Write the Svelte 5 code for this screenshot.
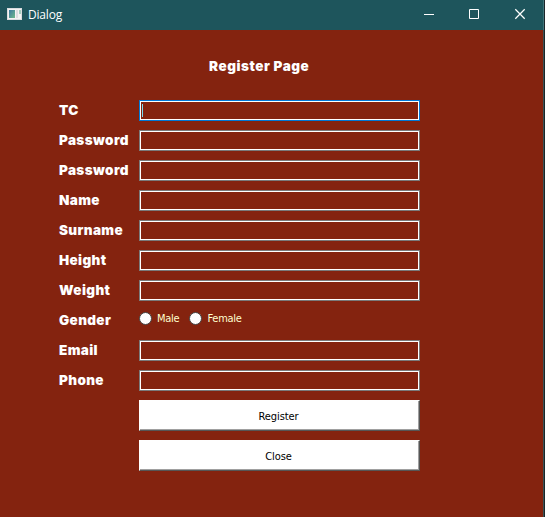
<script>
  const before = ['TC', 'Password', 'Password', 'Name', 'Surname', 'Height', 'Weight'];
  const after = ['Email', 'Phone'];
</script>

{#snippet field(label, focused)}
  <div class="row">
    <span class="label">{label}</span>
    <div class="input" class:focused>
      {#if focused}<span class="caret"></span>{/if}
    </div>
  </div>
{/snippet}

<div class="window">
  <header>
    <svg class="app-icon" width="15" height="12" viewBox="0 0 15 12">
      <defs>
        <linearGradient id="pane" x1="0" y1="0" x2="1" y2="1">
          <stop offset="0" stop-color="#3c78a0" />
          <stop offset="1" stop-color="#6fba8b" />
        </linearGradient>
      </defs>
      <rect width="15" height="12" fill="#d9dcdf" />
      <rect x="1" y="1" width="13" height="10" fill="#f3f3f3" />
      <rect x="2" y="2" width="6" height="8" fill="url(#pane)" />
      <rect x="9" y="2" width="2" height="8" fill="#dedee2" />
      <rect x="12" y="2" width="2" height="4" fill="#a3cdbf" />
    </svg>
    <span class="title">Dialog</span>
    <svg class="controls" width="104" height="12" viewBox="0 0 104 12">
      <path d="M0 6.5H10M45.5 1.5h9v9h-9z" fill="none" stroke="#fff" />
      <path d="M91.3 1.3l9.4 9.4M100.7 1.3l-9.4 9.4" fill="none" stroke="#fff" stroke-width="1.25" />
    </svg>
  </header>
  <main>
    <h1>Register Page</h1>
    {#each before as label, i}
      {@render field(label, i === 0)}
    {/each}
    <div class="row">
      <span class="label">Gender</span>
      <div class="radios">
        <span class="radio"><i></i>Male</span>
        <span class="radio"><i></i>Female</span>
      </div>
    </div>
    {#each after as label}
      {@render field(label, false)}
    {/each}
    <button>Register</button>
    <button>Close</button>
  </main>
</div>

<style>
  .window {
    box-sizing: border-box;
    width: 545px;
    height: 517px;
    overflow: hidden;
    background: #84230f;
    border-right: 1px solid #1c2629;
    box-shadow: inset -1px 0 #3c5153;
    color: #fff;
  }
  header {
    box-sizing: border-box;
    display: flex;
    align-items: center;
    height: 30px;
    padding: 0 15px 2px 7px;
    background: #1e555c;
    border-right: 1px solid #3f7379;
  }
  .title {
    margin-left: 6px;
    flex: 1;
    font: 12px/16px "Open Sans", sans-serif;
    letter-spacing: -0.2px;
    padding-top: 2px;
  }
  .controls {
    flex: none;
  }
  main {
    padding: 26px 0 0 59px;
  }
  h1 {
    margin: 0 0 24px;
    padding-left: 150px;
    font: 900 13.5px/20px Inter, sans-serif;
    letter-spacing: 0.54px;
  }
  .row {
    display: flex;
    height: 21px;
    margin-bottom: 9px;
  }
  .label {
    width: 80px;
    flex: none;
    font: 900 13.5px/20px Inter, sans-serif;
    letter-spacing: 0.38px;
    white-space: nowrap;
  }
  .input {
    box-sizing: border-box;
    width: 281px;
    height: 21px;
    border: 1px solid #7a7a7a;
    box-shadow: inset 0 0 0 1px #fff;
    padding: 3px 2px;
  }
  .focused {
    border-color: #0078d7;
  }
  .caret {
    display: block;
    width: 1px;
    height: 13px;
    background: #7bdcf0;
  }
  .radios {
    display: flex;
    gap: 10px;
    height: 17px;
    align-items: center;
  }
  .radio {
    display: flex;
    align-items: center;
    gap: 5px;
    color: #ffffd0;
    font: 11px/14px "DejaVu Sans Condensed", "DejaVu Sans", sans-serif;
    letter-spacing: -0.25px;
  }
  .radio i {
    box-sizing: border-box;
    width: 13px;
    height: 13px;
    border: 1px solid #444;
    border-radius: 50%;
    background: #fff;
  }
  button {
    display: block;
    box-sizing: border-box;
    width: 281px;
    height: 31px;
    margin: 0 0 9px 80px;
    padding: 2px 2px 0 0;
    border: 1px solid;
    border-color: #fff #565656 #565656 #fff;
    border-radius: 0;
    background: #fff;
    box-shadow: inset -1px -1px #a0a0a0;
    color: #000;
    font: 11px/14px "DejaVu Sans Condensed", "DejaVu Sans", sans-serif;
    letter-spacing: -0.1px;
  }
</style>
